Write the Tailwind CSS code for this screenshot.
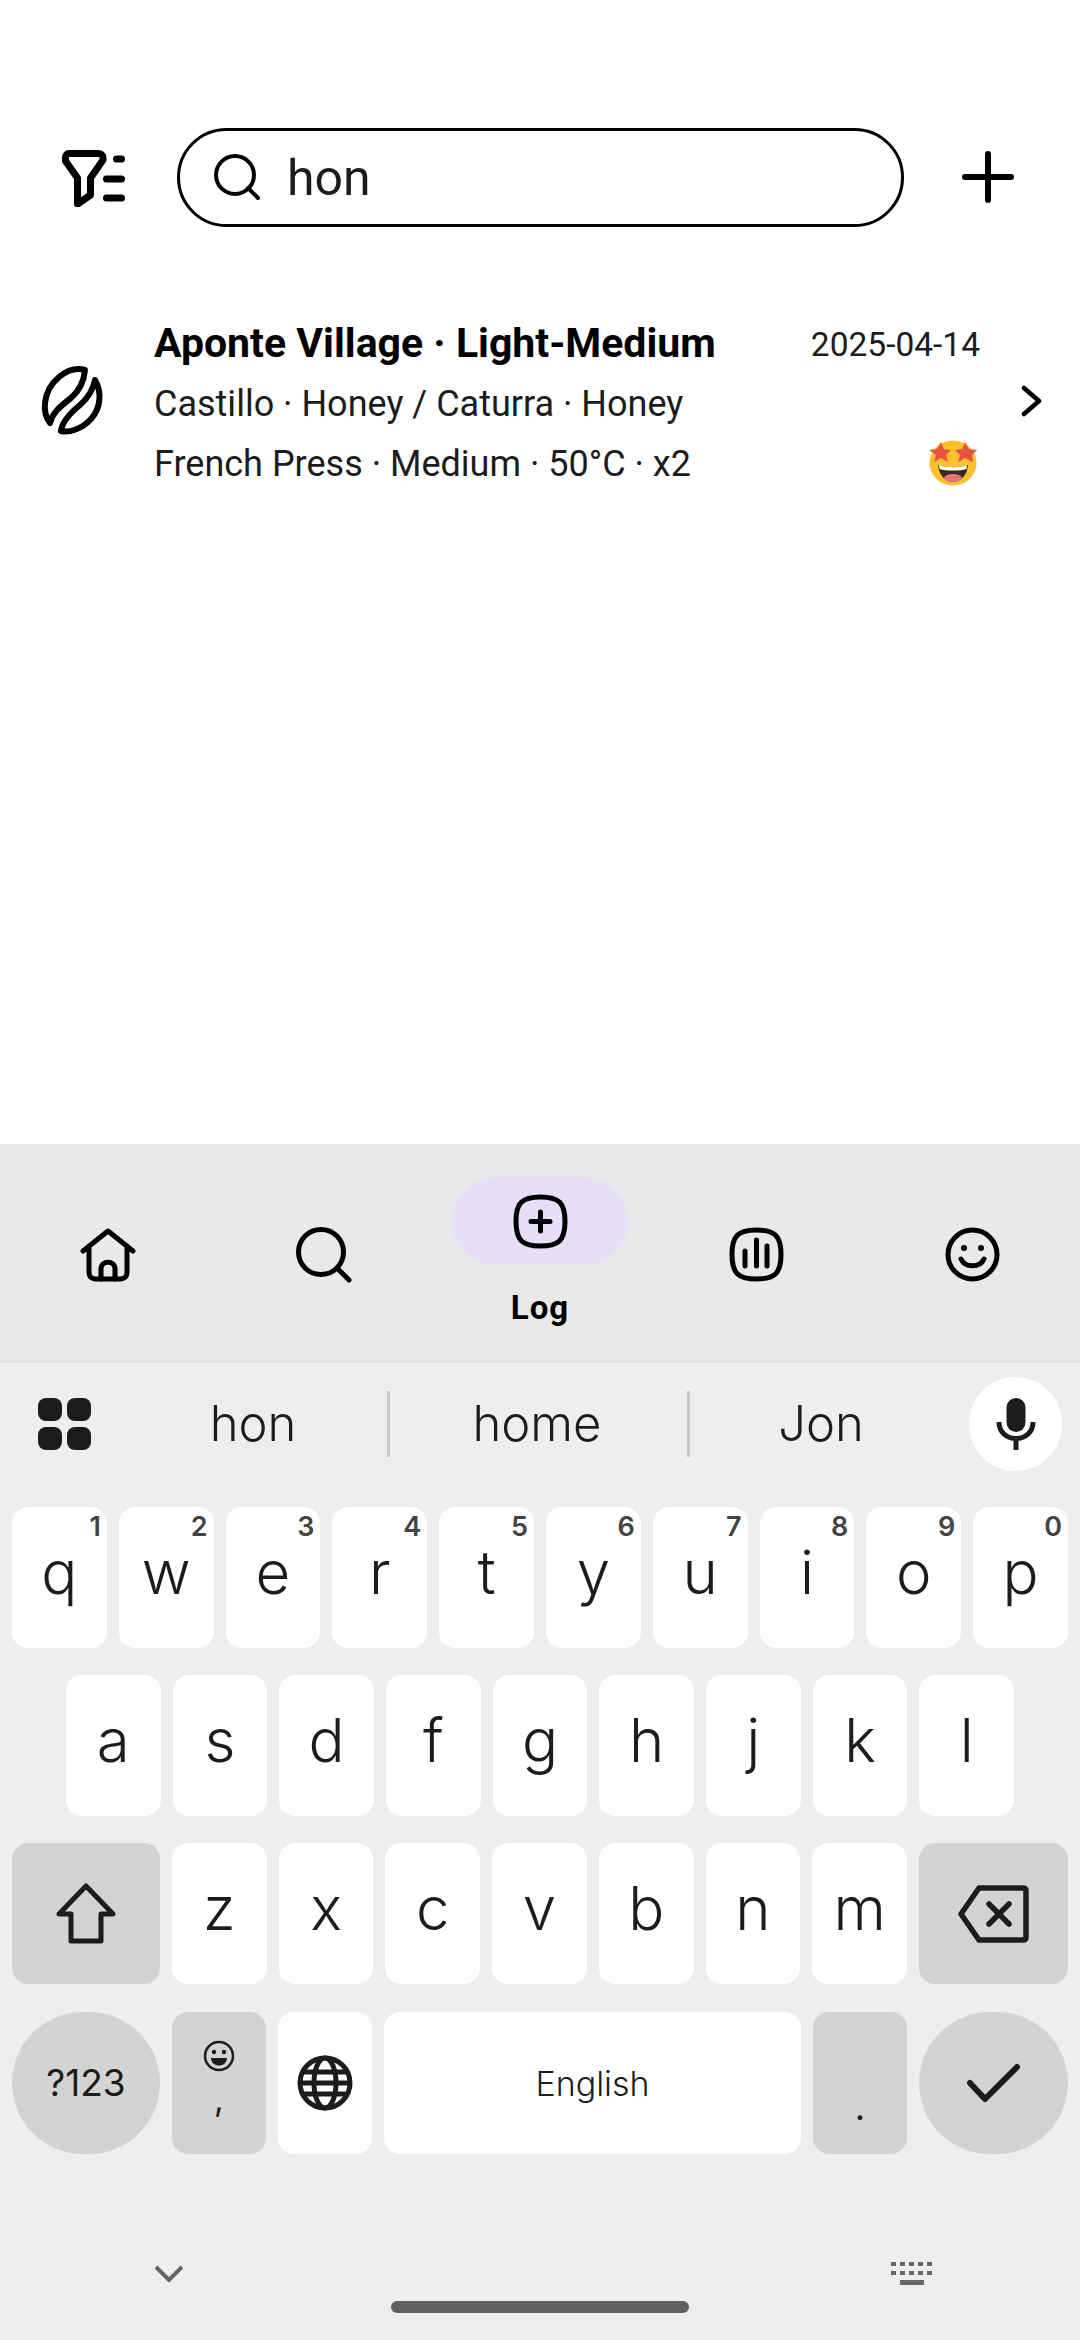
<!DOCTYPE html>
<html lang="en">
<head>
  <meta charset="UTF-8" />
  <title>Coffee log search</title>
  <script src="https://cdn.jsdelivr.net/npm/@tailwindcss/browser@4"></script>
</head>
<body class="bg-white">
<div class="w-[1080px] h-[2340px] flex flex-col overflow-hidden font-['Roboto',sans-serif] text-black">

  <!-- Search header -->
  <div class="flex items-center h-[100px] mt-[127px] pl-[60px]">
    <svg class="w-[68px] h-[60px]" viewBox="0 0 68 60" fill="none" stroke="black" stroke-width="7" stroke-linecap="round" stroke-linejoin="round">
      <path d="M9 6.500H38C41 6.500 43 8 43 11V13L30.500 31V48L17.500 57V31L5.500 14V11C5.500 8 7 6.500 9 6.500Z"/>
      <path d="M56.500 12H61.500M46.500 32H61.500M46.500 51H61.500"/>
    </svg>
    <div class="ml-[49px] w-[727px] h-[99px] rounded-full border-[3px] border-black flex items-center pl-[34px]">
      <svg class="w-[46px] h-[46px]" viewBox="0 0 46 46" fill="none" stroke="black" stroke-width="4" stroke-linecap="round">
        <circle cx="21" cy="21" r="19"/>
        <path d="M34 34L44 44"/>
      </svg>
      <span class="ml-[27px] pt-[2px] text-[50px] leading-none text-[#1c1c1c]">hon</span>
    </div>
    <svg class="ml-[58px] w-[52px] h-[52px]" viewBox="0 0 52 52" fill="none" stroke="black" stroke-width="6" stroke-linecap="round">
      <path d="M26 3V49M3 26H49"/>
    </svg>
  </div>

  <!-- Result row -->
  <div class="flex items-center mt-[87px] pl-[38px]">
    <svg class="w-[68px] h-[76px] mb-[8px]" viewBox="0 0 68 76" fill="none" stroke="black" stroke-width="6" stroke-linejoin="round">
      <path d="M47 8C30 3 9 20 7 41C6 50 9 57 12 61C14 52 20 46 33 36C41 29 46 20 47 8Z"/>
      <path d="M57 18C64 30 63 46 53 57C44 67 31 71 23 69C24 60 31 52 42 43C50 36 55 28 57 18Z"/>
    </svg>
    <div class="ml-[48px] w-[826px]">
      <div class="flex justify-between items-center h-[60px]">
        <span class="text-[41px] font-bold">Aponte Village · Light-Medium</span>
        <span class="text-[33.500px] text-[#1c1c1c] pt-[2px]">2025-04-14</span>
      </div>
      <div class="h-[59px] flex items-center text-[36px] text-[#1c1c1c]">Castillo · Honey / Caturra · Honey</div>
      <div class="flex justify-between items-center h-[61px] text-[36px] text-[#1c1c1c]">
        <span>French Press · Medium · 50°C · x2</span>
        <svg class="w-[50px] h-[48px] mr-[2px] mb-[2px]" viewBox="0 0 50 48">
          <ellipse cx="25" cy="24" rx="23.500" ry="22.500" fill="#fbc02d"/>
          <path d="M10 26C18 29 32 29 40 26C39 36 33 43 25 43C17 43 11 36 10 26Z" fill="#3e2723"/>
          <path d="M11 26C18 29 32 29 39 26L38.500 30C32 32 18 32 11.500 30Z" fill="white"/>
          <ellipse cx="25" cy="39" rx="9" ry="4" fill="#e57373"/>
          <path d="M13 3L16 10L23 11L18 16L20 23L13 19L6 23L8 16L1 11L9 10ZM37 3L41 10L49 11L44 16L45 23L37 19L30 23L32 16L27 11L34 10Z" fill="#e8533f"/>
        </svg>
      </div>
    </div>
    <svg class="ml-[38px] w-[24px] h-[36px] mb-[6px]" viewBox="0 0 24 36" fill="none" stroke="black" stroke-width="4.500" stroke-linecap="round" stroke-linejoin="round">
      <path d="M6 5L21 18L6 31"/>
    </svg>
  </div>

  <div class="flex-1"></div>

  <!-- Bottom navigation -->
  <div class="h-[219px] bg-[linear-gradient(to_bottom,#e9e9e9_97%,#e3e3e3)] flex">
    <div class="flex-1 flex justify-center pt-[84px]">
      <svg class="w-[56px] h-[54px]" viewBox="0 0 56 54" fill="none" stroke="black" stroke-width="5" stroke-linecap="round" stroke-linejoin="round">
        <path d="M3 23L28 3L53 23M9 18V44C9 49 11 50 15 51H41C45 50 47 49 47 44V18"/>
        <path d="M21 51V41C21 32 35 32 35 41V51"/>
      </svg>
    </div>
    <div class="flex-1 flex justify-center pt-[83px]">
      <svg class="w-[56px] h-[56px]" viewBox="0 0 56 56" fill="none" stroke="black" stroke-width="5" stroke-linecap="round">
        <circle cx="25" cy="25" r="22.500"/>
        <path d="M41 41L53 53"/>
      </svg>
    </div>
    <div class="flex-1 flex flex-col items-center pt-[33px]">
      <div class="w-[176px] h-[88px] rounded-full bg-[#e6dff5] flex items-center justify-center">
        <svg class="w-[55px] h-[55px]" viewBox="0 0 55 55" fill="none" stroke="black" stroke-width="5" stroke-linecap="round">
          <path d="M27.500 3C46 3 52 9 52 27.500C52 46 46 52 27.500 52C9 52 3 46 3 27.500C3 9 9 3 27.500 3Z"/>
          <path d="M27.500 18V37M18 27.500H37"/>
        </svg>
      </div>
      <span class="mt-[26px] text-[33px] leading-[34px] font-bold tracking-[1px]">Log</span>
    </div>
    <div class="flex-1 flex justify-center pt-[83px]">
      <svg class="w-[55px] h-[55px]" viewBox="0 0 55 55" fill="none" stroke="black" stroke-width="5" stroke-linecap="round">
        <path d="M27.500 3C46 3 52 9 52 27.500C52 46 46 52 27.500 52C9 52 3 46 3 27.500C3 9 9 3 27.500 3Z"/>
        <path d="M16 24V39M27.500 13V39M38 19V39"/>
      </svg>
    </div>
    <div class="flex-1 flex justify-center pt-[83px]">
      <svg class="w-[55px] h-[55px]" viewBox="0 0 55 55" fill="none" stroke="black" stroke-width="5" stroke-linecap="round">
        <circle cx="27.500" cy="27.500" r="24.500"/>
        <circle cx="19" cy="21" r="3" fill="black" stroke="none"/>
        <circle cx="36" cy="21" r="3" fill="black" stroke="none"/>
        <path d="M16 32C20 41 35 41 39 32"/>
      </svg>
    </div>
  </div>

  <!-- Keyboard -->
  <div class="h-[977px] bg-[#eeeeee] font-['Inter',sans-serif] text-[#1c1c1c] flex flex-col">
    <div class="h-[144px] pb-[22px] flex items-center">
      <div class="w-[127px] pl-[38px]">
        <div class="w-[53px] grid grid-cols-2 gap-x-[5px] gap-y-[6px]">
          <div class="h-[23px] rounded-[8px] bg-[#1c1c1c]"></div>
          <div class="h-[23px] rounded-[8px] bg-[#1c1c1c]"></div>
          <div class="h-[23px] rounded-[8px] bg-[#1c1c1c]"></div>
          <div class="h-[23px] rounded-[8px] bg-[#1c1c1c]"></div>
        </div>
      </div>
      <div class="w-[252px] mr-[8px] text-center text-[49px] font-light">hon</div>
      <div class="w-[3px] h-[66px] bg-[#c8c8c8]"></div>
      <div class="w-[294px] mr-[3px] text-center text-[49px] font-light">home</div>
      <div class="w-[3px] h-[66px] bg-[#c8c8c8]"></div>
      <div class="w-[262px] text-center text-[49px] font-light">Jon</div>
      <div class="ml-[17px] w-[93px] h-[94px] rounded-full bg-white flex items-center justify-center">
        <svg class="w-[40px] h-[52px]" viewBox="0 0 40 52" fill="none">
          <rect x="10.500" y="0" width="19" height="34" rx="9.500" fill="#1c1c1c"/>
          <path d="M3 24C3 46 37 46 37 24M20 42V52" stroke="#1c1c1c" stroke-width="5"/>
        </svg>
      </div>
    </div>

    <div class="flex flex-col gap-[27px] px-[12px]">
      <!-- row 1 -->
      <div class="flex gap-[12px] h-[141px] text-[60px] leading-none font-light">
        <div class="relative flex-1 bg-white rounded-[16px] flex justify-center pt-[35px]">q<span class="absolute top-[6px] right-[6px] text-[27px] leading-none font-semibold text-[#444444]">1</span></div>
        <div class="relative flex-1 bg-white rounded-[16px] flex justify-center pt-[35px]">w<span class="absolute top-[6px] right-[6px] text-[27px] leading-none font-semibold text-[#444444]">2</span></div>
        <div class="relative flex-1 bg-white rounded-[16px] flex justify-center pt-[35px]">e<span class="absolute top-[6px] right-[6px] text-[27px] leading-none font-semibold text-[#444444]">3</span></div>
        <div class="relative flex-1 bg-white rounded-[16px] flex justify-center pt-[35px]">r<span class="absolute top-[6px] right-[6px] text-[27px] leading-none font-semibold text-[#444444]">4</span></div>
        <div class="relative flex-1 bg-white rounded-[16px] flex justify-center pt-[35px]">t<span class="absolute top-[6px] right-[6px] text-[27px] leading-none font-semibold text-[#444444]">5</span></div>
        <div class="relative flex-1 bg-white rounded-[16px] flex justify-center pt-[35px]">y<span class="absolute top-[6px] right-[6px] text-[27px] leading-none font-semibold text-[#444444]">6</span></div>
        <div class="relative flex-1 bg-white rounded-[16px] flex justify-center pt-[35px]">u<span class="absolute top-[6px] right-[6px] text-[27px] leading-none font-semibold text-[#444444]">7</span></div>
        <div class="relative flex-1 bg-white rounded-[16px] flex justify-center pt-[35px]">i<span class="absolute top-[6px] right-[6px] text-[27px] leading-none font-semibold text-[#444444]">8</span></div>
        <div class="relative flex-1 bg-white rounded-[16px] flex justify-center pt-[35px]">o<span class="absolute top-[6px] right-[6px] text-[27px] leading-none font-semibold text-[#444444]">9</span></div>
        <div class="relative flex-1 bg-white rounded-[16px] flex justify-center pt-[35px]">p<span class="absolute top-[6px] right-[6px] text-[27px] leading-none font-semibold text-[#444444]">0</span></div>
      </div>
      <!-- row 2 -->
      <div class="flex gap-[12px] h-[141px] text-[60px] leading-none font-light px-[54px]">
        <div class="flex-1 bg-white rounded-[16px] flex justify-center pt-[35px]">a</div>
        <div class="flex-1 bg-white rounded-[16px] flex justify-center pt-[35px]">s</div>
        <div class="flex-1 bg-white rounded-[16px] flex justify-center pt-[35px]">d</div>
        <div class="flex-1 bg-white rounded-[16px] flex justify-center pt-[35px]">f</div>
        <div class="flex-1 bg-white rounded-[16px] flex justify-center pt-[35px]">g</div>
        <div class="flex-1 bg-white rounded-[16px] flex justify-center pt-[35px]">h</div>
        <div class="flex-1 bg-white rounded-[16px] flex justify-center pt-[35px]">j</div>
        <div class="flex-1 bg-white rounded-[16px] flex justify-center pt-[35px]">k</div>
        <div class="flex-1 bg-white rounded-[16px] flex justify-center pt-[35px]">l</div>
      </div>
      <!-- row 3 -->
      <div class="flex gap-[12px] h-[141px] text-[60px] leading-none font-light">
        <div class="w-[148px] bg-[#d3d3d3] rounded-[16px] flex items-center justify-center">
          <svg class="w-[62px] h-[62px]" viewBox="0 0 62 62" fill="none" stroke="#1c1c1c" stroke-width="5" stroke-linejoin="round">
            <path d="M31 3L58 31H46V58H16V31H4Z"/>
          </svg>
        </div>
        <div class="flex-1 bg-white rounded-[16px] flex justify-center pt-[35px]">z</div>
        <div class="flex-1 bg-white rounded-[16px] flex justify-center pt-[35px]">x</div>
        <div class="flex-1 bg-white rounded-[16px] flex justify-center pt-[35px]">c</div>
        <div class="flex-1 bg-white rounded-[16px] flex justify-center pt-[35px]">v</div>
        <div class="flex-1 bg-white rounded-[16px] flex justify-center pt-[35px]">b</div>
        <div class="flex-1 bg-white rounded-[16px] flex justify-center pt-[35px]">n</div>
        <div class="flex-1 bg-white rounded-[16px] flex justify-center pt-[35px]">m</div>
        <div class="w-[149px] bg-[#d3d3d3] rounded-[16px] flex items-center justify-center">
          <svg class="w-[72px] h-[58px]" viewBox="0 0 72 58" fill="none" stroke="#1c1c1c" stroke-width="5.500" stroke-linecap="round" stroke-linejoin="round">
            <path d="M21 3H65C67 3 68 4 68 6V52C68 54 67 55 65 55H21L3 29Z"/>
            <path d="M31 19L51 39M51 19L31 39"/>
          </svg>
        </div>
      </div>
      <!-- row 4 -->
      <div class="flex gap-[12px] h-[142px] mt-[1px]">
        <div class="w-[148px] bg-[#d3d3d3] rounded-full flex items-center justify-center text-[37px]">?123</div>
        <div class="w-[94px] bg-[#d3d3d3] rounded-[16px] flex flex-col items-center pt-[28px]">
          <svg class="w-[32px] h-[32px]" viewBox="0 0 32 32" fill="none" stroke="#1c1c1c" stroke-width="2.500">
            <circle cx="16" cy="16" r="14"/>
            <circle cx="11" cy="12" r="2.200" fill="#1c1c1c" stroke="none"/>
            <circle cx="21" cy="12" r="2.200" fill="#1c1c1c" stroke="none"/>
            <path d="M8 18H24C24 28 8 28 8 18Z" fill="#1c1c1c" stroke="none"/>
          </svg>
          <span class="text-[34px] leading-none mt-[10px]">,</span>
        </div>
        <div class="w-[94px] bg-white rounded-[16px] flex items-center justify-center">
          <svg class="w-[56px] h-[56px]" viewBox="0 0 56 56" fill="none" stroke="#1c1c1c" stroke-width="5">
            <circle cx="28" cy="28" r="25"/>
            <ellipse cx="28" cy="28" rx="11" ry="25"/>
            <path d="M6 17H50M6 39H50M3 28H53"/>
          </svg>
        </div>
        <div class="flex-1 bg-white rounded-[16px] flex items-center justify-center text-[34px] font-light">English</div>
        <div class="w-[94px] bg-[#d3d3d3] rounded-[16px] flex justify-center pt-[68px] text-[36px]">.</div>
        <div class="w-[149px] bg-[#d3d3d3] rounded-full flex items-center justify-center">
          <svg class="w-[54px] h-[40px]" viewBox="0 0 54 40" fill="none" stroke="#1c1c1c" stroke-width="6" stroke-linecap="round" stroke-linejoin="round">
            <path d="M3 20L18 36L50 4"/>
          </svg>
        </div>
      </div>
    </div>

    <!-- Keyboard footer -->
    <div class="flex justify-between items-center mt-[108px] pl-[155px] pr-[147px]">
      <svg class="w-[28px] h-[18px]" viewBox="0 0 28 18" fill="none" stroke="#666666" stroke-width="4">
        <path d="M1 2L14 15L27 2"/>
      </svg>
      <div class="flex flex-col items-center gap-[5px]">
        <div class="w-[42px] h-[4px] bg-[repeating-linear-gradient(90deg,#666666_0,#666666_5px,transparent_5px,transparent_9px)]"></div>
        <div class="w-[42px] h-[4px] bg-[repeating-linear-gradient(90deg,#666666_0,#666666_5px,transparent_5px,transparent_9px)]"></div>
        <div class="w-[24px] h-[5px] bg-[#666666]"></div>
      </div>
    </div>
    <div class="mt-[16px] self-center w-[298px] h-[12px] rounded-full bg-[#5f5f5f]"></div>
  </div>
</div>
</body>
</html>
